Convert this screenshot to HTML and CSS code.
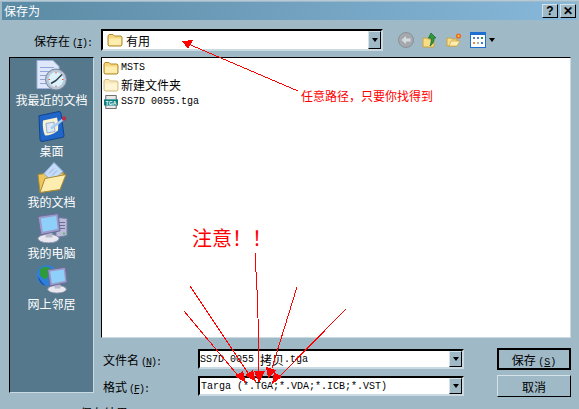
FILE: index.html
```html
<!DOCTYPE html>
<html>
<head>
    <title>保存为</title>
    <link rel="stylesheet" href="styles.css">
</head>
<body>
    <svg class="defs" width="0" height="0">
        <symbol id="folder" viewBox="0 0 16 14">
            <path d="M1 3 L2 1.500 H6 L7.500 3 H14 L15 4 V12 L14 13 H2 L1 12 Z" fill="#f7d77c" stroke="#b08a2e"/>
            <path d="M2 5.500 H14 V12 H2 Z" fill="#fdeeb0"/>
        </symbol>
        <symbol id="monitor" viewBox="0 0 26 32">
            <ellipse cx="13" cy="27" rx="11" ry="4.500" fill="#e8e8f0" stroke="#8a8aa8"/>
            <path d="M10 21 H17 V26 H10 Z" fill="#b8b8cc"/>
            <path d="M2 4 L23 1 L25 19 L5 23 Z" fill="#9a9ac8" stroke="#6a6a9a"/>
            <path d="M5 6 L21 3.500 L22.500 17 L7 20 Z" fill="#8fd0fa"/>
        </symbol>
    </svg>

    <div class="dialog">
        <div class="titlebar">
            <span class="title">保存为</span>
            <div class="caption-btns">
                <span class="caption-btn">?</span>
                <span class="caption-btn">✕</span>
            </div>
        </div>

        <div class="top-row">
            <label class="top-label">保存在<span class="lat tight">(<u>I</u>):</span></label>
            <div class="combo combo-top">
                <div class="combo-text">
                    <svg class="ico16" viewBox="0 0 16 14"><use href="#folder"/></svg>
                    <span>有用</span>
                </div>
                <span class="combo-btn"><i class="down"></i></span>
            </div>
            <div class="toolbar">
                <svg class="tool" viewBox="0 0 16 16">
                    <circle cx="8" cy="8" r="7.500" fill="#a5a9ae" stroke="#8b9095"/>
                    <path d="M3.500 8 L8 4 V6.500 H12.500 V9.500 H8 V12 Z" fill="#d5dde3"/>
                </svg>
                <svg class="tool" viewBox="0 0 16 16">
                    <path d="M1 6 H5 L6 7 H12 V15 H1 Z" fill="#f7dd88" stroke="#c9a53e"/>
                    <path d="M9 1 L14 6 H12 C12 10 11 12 8 14 C9 11 9.500 9 9 6 H6.500 Z" fill="#2c9a37" stroke="#14662a" stroke-width=".7"/>
                </svg>
                <svg class="tool" viewBox="0 0 16 16">
                    <path d="M1 6 H5 L6 7 H11 V14 H1 Z" fill="#f7dd88" stroke="#c9a53e"/>
                    <path d="M3 14 L5 9 H14 L11 14 Z" fill="#fdeeb0" stroke="#c9a53e" stroke-width=".7"/>
                    <circle cx="12.500" cy="4" r="2.600" fill="#ee6a22"/>
                    <circle cx="12.500" cy="4" r="1" fill="#ffd34a"/>
                </svg>
                <span class="views">
                    <svg class="tool" viewBox="0 0 16 16">
                        <rect x=".5" y=".5" width="15" height="15" fill="#fff" stroke="#1f6fd0"/>
                        <rect x="1" y="1" width="14" height="2" fill="#1f6fd0"/>
                        <rect x="3" y="5" width="2" height="2" fill="#5d7fc0"/>
                        <rect x="7" y="5" width="2" height="2" fill="#5d7fc0"/>
                        <rect x="11" y="5" width="2" height="2" fill="#2f9a3a"/>
                        <rect x="3" y="10" width="2" height="2" fill="#ee8a3a"/>
                        <rect x="7" y="10" width="2" height="2" fill="#aab0c0"/>
                        <rect x="11" y="10" width="2" height="2" fill="#3a80d0"/>
                    </svg>
                    <i class="down"></i>
                </span>
            </div>
        </div>

        <div class="main">
            <div class="places">
                <div class="place">
                    <svg class="place-ico" viewBox="0 0 32 32">
                        <path d="M1 1 H17 L23 7 V29 H1 Z" fill="#dfe8fa" stroke="#9fb2dc"/>
                        <path d="M4 8 H18 M4 12 H14 M4 16 H12 M4 20 H12 M4 24 H14" stroke="#8ea6dc"/>
                        <circle cx="20" cy="20" r="10.500" fill="#b9c6d6" stroke="#76869c"/>
                        <circle cx="20" cy="20" r="7.500" fill="#dcf2fb"/>
                        <path d="M20 21 L26 15 M20 21 L15 24" stroke="#33414f" stroke-width="1.500"/>
                        <path d="M20 12.500 V14 M20 26 V27.500 M12.500 20 H14 M26 20 H27.500" stroke="#d8553a"/>
                    </svg>
                    <span>我最近的文档</span>
                </div>
                <div class="place">
                    <svg class="place-ico" viewBox="0 0 32 32">
                        <path d="M3 7 Q2 5 4 5 L23 1 Q25 1 25 3 L28 25 Q28 27 26 27 L6 31 Q4 31 4 29 Z" fill="#1f66c8" stroke="#12448f"/>
                        <path d="M7 10 L21 7 Q23 13 22 20 Q16 25 9 25 Q6 18 7 10 Z" fill="#fbf2cf"/>
                        <path d="M10 13 L18 11.500 L19 21 L11 22.500 Z" fill="#dbe8f8" stroke="#6f92c4" stroke-width=".7"/>
                        <path d="M15 18 L27 9" stroke="#a9c9f0" stroke-width="2.500"/>
                        <circle cx="28" cy="8" r="2.200" fill="#b5304a"/>
                    </svg>
                    <span>桌面</span>
                </div>
                <div class="place">
                    <svg class="place-ico" viewBox="0 0 32 32">
                        <path d="M2 13 L9 12 L11 15 L28 11 L24 28 L4 31 Z" fill="#eec65e" stroke="#a88a30"/>
                        <path d="M8 12 L18 1 L27 10 L16 20 Z" fill="#c4dcfa" stroke="#8fb0dc"/>
                        <path d="M13 12 L18 7 M16 14 L21 9" stroke="#8fb0dc"/>
                        <path d="M4 31 L9 17 L30 13 L24 28 Z" fill="#fdeeb0" stroke="#a88a30"/>
                    </svg>
                    <span>我的文档</span>
                </div>
                <div class="place">
                    <svg class="place-ico" viewBox="0 0 32 32">
                        <path d="M20 5 L31 6 V23 L20 25 Z" fill="#b8bad8" stroke="#7c7ea8"/>
                        <path d="M23 10 H29 M23 13 H29 M23 16 H29" stroke="#6c6e98"/>
                        <circle cx="28" cy="21" r="1" fill="#3ec24a"/>
                        <use href="#monitor" x="0" y="0" width="25" height="31"/>
                    </svg>
                    <span>我的电脑</span>
                </div>
                <div class="place">
                    <svg class="place-ico" viewBox="0 0 32 32">
                        <circle cx="11" cy="12" r="10.500" fill="#2f7fd8"/>
                        <path d="M4 6 C8 2 13 3 15 6 C14 10 12 11 11 15 C8 17 6 13 4 12 Z" fill="#2e9a3a"/>
                        <path d="M2 13 C5 17 6 20 10 22 C6 22 3 18 2 13 Z" fill="#1b4f9c"/>
                        <use href="#monitor" x="10" y="1" width="22" height="31"/>
                    </svg>
                    <span>网上邻居</span>
                </div>
            </div>

            <div class="right-col">
                <div class="list">
                    <div class="file">
                        <svg class="ico16" viewBox="0 0 16 14"><use href="#folder"/></svg>
                        <span class="lat">MSTS</span>
                    </div>
                    <div class="file">
                        <svg class="ico16 faded" viewBox="0 0 16 14"><use href="#folder"/></svg>
                        <span>新建文件夹</span>
                    </div>
                    <div class="file">
                        <svg class="ico16" viewBox="0 0 16 16">
                            <path d="M2 .5 H14 V15.500 H2 Z" fill="#e8e8e8" stroke="#555"/>
                            <rect x="0" y="5" width="16" height="7" fill="#0b7f7f"/>
                            <text class="tga-tag" x="8" y="11">TGA</text>
                        </svg>
                        <span class="lat">SS7D 0055.tga</span>
                    </div>
                </div>

                <div class="form">
                    <label class="form-label">文件名<span class="lat tight">(<u>N</u>):</span></label>
                    <div class="combo">
                        <div class="combo-text field-text"><span class="lat">SS7D 0055 </span><span>拷贝</span><span class="lat">.tga</span></div>
                        <span class="combo-btn"><i class="down"></i></span>
                    </div>
                    <button class="btn btn-default">保存 <span class="lat">(<u>S</u>)</span></button>

                    <label class="form-label">格式<span class="lat tight">(<u>F</u>):</span></label>
                    <div class="combo">
                        <div class="combo-text field-text field-indent"><span class="lat">Targa (*.TGA;*.VDA;*.ICB;*.VST)</span></div>
                        <span class="combo-btn"><i class="down"></i></span>
                    </div>
                    <button class="btn">取消</button>
                </div>
            </div>
        </div>

        <div class="cut-line">保存结果</div>

        <!-- red notes drawn on top of the screenshot -->
        <svg class="marks" viewBox="0 0 579 409">
            <g class="mark-lines">
                <path d="M298 91 L186 43"/>
                <path d="M184 311 L240 378"/>
                <path d="M190 286 L250 376"/>
                <path d="M255 253 L257 290 L258 318 L259 374"/>
                <path d="M297 287 L272 368"/>
                <path d="M346 309 L277 379"/>
            </g>
            <g class="mark-heads">
                <path d="M182 41 L193 40 L188 49 Z"/>
                <path d="M246 383 L235 376 L243 371 Z"/>
                <path d="M256 382 L245 375 L253 370 Z"/>
                <path d="M259 383 L254 371 L265 371 Z"/>
                <path d="M268 378 L266 367 L276 370 Z"/>
                <path d="M272 384 L274 372 L282 377 Z"/>
            </g>
        </svg>
        <div class="note note-path">任意路径，只要你找得到</div>
        <div class="note note-warn">注意！！</div>
    </div>
</body>
</html>
```

FILE: styles.css
```css
body {
    margin: 0;
    padding: 0;
    overflow: hidden;
    font-family: "Noto Sans CJK SC", "Liberation Mono", sans-serif;
    font-size: 12px;
    color: #000000;
}
.defs {
    position: absolute;
}
.dialog {
    position: relative;
    width: 579px;
    height: 409px;
    overflow: hidden;
    background-color: #9fb9c7;
    display: flex;
    flex-direction: column;
    box-sizing: border-box;
    padding-top: 2px;
    border-top: 1px solid #b4cad6;
}
.lat {
    font-family: "Liberation Mono", monospace;
    font-size: 10px;
    white-space: pre;
}
.tight {
    letter-spacing: -1px;
    margin-left: 2px;
}
.titlebar {
    height: 18px;
    margin: -1px 2px 0;
    padding: 0 2px;
    display: flex;
    align-items: center;
    justify-content: space-between;
    background: linear-gradient(to right, #5b8aa4, #88b8da);
}
.title {
    color: #ffffff;
    line-height: 18px;
}
.caption-btns {
    display: flex;
    gap: 2px;
    margin-right: -1px;
}
.caption-btn {
    width: 16px;
    height: 14px;
    box-sizing: border-box;
    background-color: #9fb9c7;
    border: 1px solid;
    border-color: #d4e2ea #000000 #000000 #d4e2ea;
    font: bold 12px/12px "Liberation Sans", sans-serif;
    text-align: center;
}
.top-row {
    height: 22px;
    margin-top: 9px;
    display: flex;
    align-items: center;
}
.top-label {
    width: 67px;
    margin-left: 34px;
    white-space: nowrap;
}
.combo {
    height: 20px;
    box-sizing: border-box;
    display: flex;
    background-color: #ffffff;
    border: 2px solid;
    border-color: #000000 #c9dae3 #c9dae3 #000000;
}
.combo-top {
    width: 282px;
    height: 22px;
}
.combo-text {
    flex: 1;
    display: flex;
    align-items: center;
    gap: 3px;
    padding-left: 4px;
    white-space: nowrap;
}
.field-text {
    gap: 0;
    padding-left: 0;
}
.field-indent {
    padding-left: 1px;
}
.combo-btn {
    width: 13px;
    box-sizing: border-box;
    display: flex;
    align-items: center;
    justify-content: center;
    background-color: #9fb9c7;
    border: 1px solid;
    border-color: #d4e2ea #000000 #000000 #d4e2ea;
}
.down {
    display: block;
    width: 0;
    height: 0;
    border: 3px solid transparent;
    border-top: 4px solid #000000;
    border-bottom: 0;
}
.ico16 {
    width: 16px;
    height: 14px;
    flex: none;
}
.faded {
    opacity: 0.55;
}
.toolbar {
    margin-left: 15px;
    display: flex;
    align-items: center;
    gap: 8px;
}
.tool {
    width: 16px;
    height: 16px;
    display: block;
}
.views {
    display: flex;
    align-items: center;
    gap: 3px;
}
.main {
    margin-top: 6px;
    display: flex;
}
.places {
    width: 85px;
    height: 336px;
    margin-left: 9px;
    box-sizing: border-box;
    display: flex;
    flex-direction: column;
    padding-top: 1px;
    background-color: #56788c;
    border: 1px solid;
    border-color: #000000 #c9dae3 #c9dae3 #000000;
    color: #ffffff;
}
.place {
    height: 51px;
    display: flex;
    flex-direction: column;
    align-items: center;
}
.place-ico {
    width: 32px;
    height: 33px;
    flex: none;
}
.place span {
    line-height: 16px;
    white-space: nowrap;
}
.right-col {
    width: 470px;
    margin-left: 7px;
}
.list {
    height: 281px;
    box-sizing: border-box;
    padding: 1px 0 0 1px;
    background-color: #ffffff;
    border: 1px solid;
    border-color: #000000 #c9dae3 #c9dae3 #000000;
}
.file {
    height: 17px;
    display: flex;
    align-items: center;
    gap: 2px;
}
.tga-tag {
    font: bold 6px "Liberation Sans", sans-serif;
    fill: #ffffff;
    text-anchor: middle;
}
.form {
    margin-top: 10px;
    display: grid;
    grid-template-columns: 97px 266px 74px;
    grid-template-rows: 22px 22px;
    row-gap: 5px;
    align-items: center;
}
.form-label {
    padding-left: 2px;
    white-space: nowrap;
}
.btn {
    width: 74px;
    height: 22px;
    margin-left: 33px;
    padding: 0;
    box-sizing: border-box;
    background-color: #9fb9c7;
    border: 1px solid;
    border-color: #d4e2ea #000000 #000000 #d4e2ea;
    font-family: "Noto Sans CJK SC", sans-serif;
    font-size: 12px;
    color: #000000;
}
.btn-default {
    border: 2px solid #000000;
}
.cut-line {
    margin: 9px 0 0 80px;
    line-height: 14px;
}
.marks {
    position: absolute;
    left: 0;
    top: -1px;
    width: 579px;
    height: 409px;
    shape-rendering: crispEdges;
}
.mark-lines path {
    fill: none;
    stroke: #ff0000;
    stroke-width: 1;
}
.mark-heads path {
    fill: #ff0000;
}
.note {
    position: absolute;
    color: #ff0000;
    white-space: nowrap;
}
.note-path {
    left: 301px;
    top: 86px;
}
.note-warn {
    left: 192px;
    top: 222px;
    font-size: 20px;
}
```
